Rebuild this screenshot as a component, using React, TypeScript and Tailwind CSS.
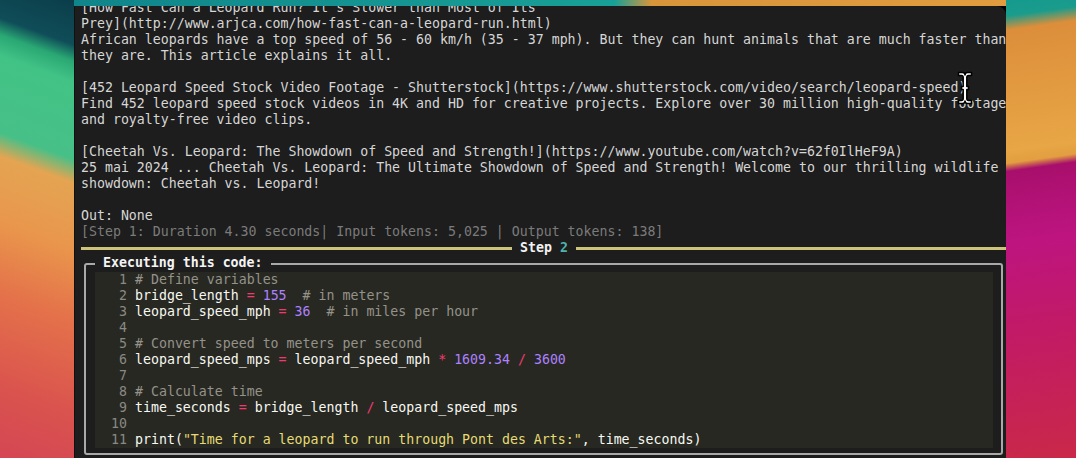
type Tok = [string, string];

const OUT_LINES = [
  "[How Fast Can a Leopard Run? It's Slower than Most of Its",
  "Prey](http://www.arjca.com/how-fast-can-a-leopard-run.html)",
  "African leopards have a top speed of 56 - 60 km/h (35 - 37 mph). But they can hunt animals that are much faster than",
  "they are. This article explains it all.",
  "",
  "[452 Leopard Speed Stock Video Footage - Shutterstock](https://www.shutterstock.com/video/search/leopard-speed)",
  "Find 452 leopard speed stock videos in 4K and HD for creative projects. Explore over 30 million high-quality footage",
  "and royalty-free video clips.",
  "",
  "[Cheetah Vs. Leopard: The Showdown of Speed and Strength!](https://www.youtube.com/watch?v=62f0IlHeF9A)",
  "25 mai 2024 ... Cheetah Vs. Leopard: The Ultimate Showdown of Speed and Strength! Welcome to our thrilling wildlife",
  "showdown: Cheetah vs. Leopard!",
  "",
  "Out: None",
];

const N = "#f8f8f2";
const OP = "#f2386f";
const NUM = "#ae81ff";
const CM = "#95928a";
const STR = "#e6db74";

const CODE: Tok[][] = [
  [["# Define variables", CM]],
  [["bridge_length ", N], ["=", OP], [" ", N], ["155", NUM], ["  ", N], ["# in meters", CM]],
  [["leopard_speed_mph ", N], ["=", OP], [" ", N], ["36", NUM], ["  ", N], ["# in miles per hour", CM]],
  [],
  [["# Convert speed to meters per second", CM]],
  [["leopard_speed_mps ", N], ["=", OP], [" leopard_speed_mph ", N], ["*", OP], [" ", N], ["1609.34", NUM], [" ", N], ["/", OP], [" ", N], ["3600", NUM]],
  [],
  [["# Calculate time", CM]],
  [["time_seconds ", N], ["=", OP], [" bridge_length ", N], ["/", OP], [" leopard_speed_mps", N]],
  [],
  [["print(", N], ['"Time for a leopard to run through Pont des Arts:"', STR], [", time_seconds)", N]],
];

// text-select I-beam pointer hovering over the output
const Cursor = () => (
  <svg width="16" height="34" viewBox="0 0 16 34" className="absolute left-[882px] top-[65px]">
    <path
      d="M1.5 1.5 H5.5 Q8 1.5 8 4 Q8 1.5 10.5 1.5 H14.5 V4.5 H11.5 Q9.8 4.5 9.8 6.5 V15.5 H11.5 V18.5 H9.8 V27.5 Q9.8 29.5 11.5 29.5 H14.5 V32.5 H10.5 Q8 32.5 8 30 Q8 32.5 5.5 32.5 H1.5 V29.5 H4.5 Q6.2 29.5 6.2 27.5 V18.5 H4.5 V15.5 H6.2 V6.5 Q6.2 4.5 4.5 4.5 H1.5 Z"
      fill="#ffffff"
      stroke="#000000"
      strokeWidth="1.5"
      strokeLinejoin="round"
    />
  </svg>
);

export default function App() {
  return (
    <div className="flex h-[458px] w-[1076px] overflow-hidden bg-black">
      <div className="w-[74px] shrink-0 bg-[linear-gradient(200deg,#0b3d4a_0px,#0f4d58_42px,#2aa874_58px,#42c386_78px,#47c087_150px,#e4a452_172px,#e9964c_235px,#e4724a_300px,#da534e_390px,#d44654_458px)]" />

      <div className="flex w-[932px] shrink-0 flex-col">
        <div className="h-[6px] shrink-0 bg-[linear-gradient(to_right,#10858a_0%,#19a096_58%,#d8953a_62%,#e29c40_100%)]" />
        <div className="relative flex-1 overflow-hidden rounded-tr-[9px] border-l border-[#111] bg-[#1d1d1d] pl-[6px] font-['DejaVu_Sans_Mono','Liberation_Mono',monospace] text-[13.25px] leading-4 text-[#d6d6d6]">
          <div className="-mt-[6px] w-[926px]">
            {OUT_LINES.map((l, i) => (
              <div key={i} className="h-4 whitespace-pre">
                {l}
              </div>
            ))}
            <div className="h-4 whitespace-pre text-[#7b7b7b]">
              [Step 1: Duration 4.30 seconds| Input tokens: 5,025 | Output tokens: 138]
            </div>

            <div className="flex h-4 items-center">
              <div className="h-[3px] flex-1 bg-[#cdc47a]" />
              <span className="whitespace-pre font-bold text-[#f2f2f2]">
                {" Step "}
                <span className="text-[#4fb5ab]">2</span>
                {" "}
              </span>
              <div className="h-[3px] flex-1 bg-[#cdc47a]" />
            </div>

            <div className="relative ml-[3px] mt-[7px] w-[919px] rounded-[3px] border-2 border-[#a9a9a9] pb-[5px] pt-[7px]">
              <span className="absolute -top-[10px] left-[9px] whitespace-pre bg-[#1d1d1d] font-bold text-[#f4f4f4]">
                {" Executing this code: "}
              </span>
              <div className="ml-[9px] mr-[8px] bg-[#272822]">
                {CODE.map((toks, i) => (
                  <div key={i} className="flex h-4 whitespace-pre">
                    <span className="w-[32px] text-right text-[#8a8a84]">{i + 1}</span>
                    <span className="pl-[8px]">
                      {toks.map(([t, c], j) => (
                        <span key={j} style={{ color: c }}>
                          {t}
                        </span>
                      ))}
                    </span>
                  </div>
                ))}
              </div>
            </div>
          </div>
          <Cursor />
        </div>
      </div>

      <div className="flex-1 bg-[linear-gradient(172deg,#159a8e_0px,#1a9c8c_16px,#dc8e3a_30px,#e8a646_150px,#e29e40_162px,#a80f6c_170px,#bd1480_240px,#c21a66_330px,#c9284a_458px)]" />
    </div>
  );
}
